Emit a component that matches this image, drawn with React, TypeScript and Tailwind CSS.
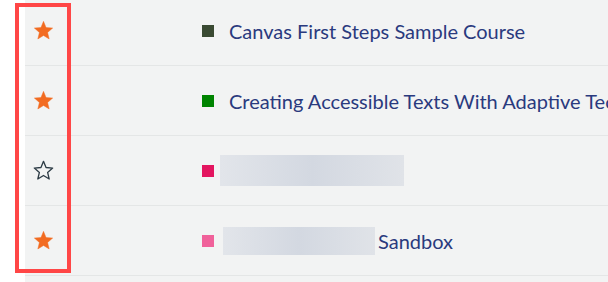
import React from "react";

type Course = {
  starred: boolean;
  color: string;
  name?: string;
  blurOffset?: number;
  blurWidth?: number;
  blurHeight?: number;
  suffix?: string;
};

const courses: Course[] = [
  { starred: true, color: "bg-[#3a4a32]", name: "Canvas First Steps Sample Course" },
  { starred: true, color: "bg-[#008400]", name: "Creating Accessible Texts With Adaptive Technology" },
  { starred: false, color: "bg-[#e3155f]", blurOffset: 6, blurWidth: 184, blurHeight: 31 },
  { starred: true, color: "bg-[#f0619a]", blurOffset: 9, blurWidth: 152, blurHeight: 28, suffix: "Sandbox" },
];

const Star = ({ filled }: { filled: boolean }) => (
  <svg width="21" height="21" viewBox="0 0 24 24" aria-hidden>
    <polygon
      points="12,1.5 14.9,8.6 22.5,9.2 16.7,14.2 18.5,21.7 12,17.7 5.5,21.7 7.3,14.2 1.5,9.2 9.1,8.6"
      fill={filled ? "#f26b21" : "none"}
      stroke={filled ? "#f26b21" : "#2d3b45"}
      strokeWidth={filled ? 0.5 : 1.5}
      strokeLinejoin="round"
    />
  </svg>
);

export default function App() {
  return (
    <div className="relative w-[608px] h-[282px] overflow-hidden bg-white flex font-['Lato','Noto_Sans',sans-serif]">
      <div className="w-[25px] shrink-0" />
      <div className="flex-1 min-w-0 bg-[#f2f3f3] -mt-[4px]">
        {courses.map((c, i) => (
          <div key={i} className="h-[70px] border-b border-[#e4e6e6] flex items-center overflow-hidden">
            <div className="w-[29px] shrink-0 flex justify-end">
              <Star filled={c.starred} />
            </div>
            <div className="w-[148px] shrink-0" />
            <span className={`w-[12px] h-[12px] shrink-0 ${c.color}`} />
            {c.name ? (
              <span className="ml-[15px] whitespace-nowrap text-[20px] leading-[24px] text-[#2a3a7e] pt-[1px]">
                {c.name}
              </span>
            ) : (
              <span className="flex items-center whitespace-nowrap">
                <span
                  className="bg-gradient-to-r from-[#e2e5ea] via-[#d3d8e1] to-[#e0e3e8] blur-[0.5px]"
                  style={{ marginLeft: c.blurOffset, width: c.blurWidth, height: c.blurHeight }}
                />
                {c.suffix && (
                  <span className="ml-[3px] text-[20px] leading-[24px] text-[#2a3a7e] pt-[1px]">{c.suffix}</span>
                )}
              </span>
            )}
          </div>
        ))}
      </div>
      <div className="absolute left-[15px] top-[3px] w-[56px] h-[270px] border-4 border-[#ff4646]" />
    </div>
  );
}
